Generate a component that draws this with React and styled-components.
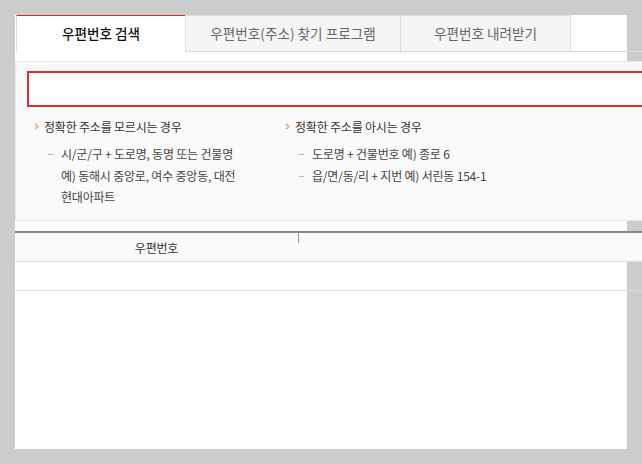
import React from "react";
import styled, { createGlobalStyle } from "styled-components";

const GlobalStyle = createGlobalStyle`
  html, body {
    margin: 0;
    padding: 0;
    background: #cccccc;
    overflow: hidden;
  }
  body {
    padding: 15px;
    font-family: "Noto Sans CJK KR", "Noto Sans", sans-serif;
    color: #333;
  }
  * { box-sizing: border-box; }
`;

const Panel = styled.div`
  width: 612px;
  height: 434px;
  background: #ffffff;
`;

const Content = styled.div`
  width: 660px;
`;

const TabBar = styled.div`
  display: flex;
  padding-left: 1px;
`;

const Tab = styled.div`
  width: ${(p) => p.$w}px;
  height: 37px;
  display: flex;
  align-items: center;
  justify-content: center;
  font-size: 13.6px;
  border: 1px solid #dddddd;
  border-right: ${(p) => (p.$last ? "1px solid #dddddd" : "none")};
  border-top-color: ${(p) => (p.$active ? "#e2241f" : "#dddddd")};
  border-bottom-color: ${(p) => (p.$active ? "#ffffff" : "#d8d8d8")};
  background: ${(p) => (p.$active ? "#ffffff" : "#f5f5f5")};
  color: ${(p) => (p.$active ? "#111111" : "#666666")};
  font-weight: ${(p) => (p.$active ? 500 : 400)};
  padding-bottom: 2px;
`;

const TabFill = styled.div`
  flex: 1;
  height: 37px;
  border-bottom: 1px solid #d8d8d8;
`;

const SearchBox = styled.div`
  margin-top: 9px;
  border: 1px solid #e8e8e8;
  background: #fafafa;
  height: 160px;
  padding: 9px 0 0 11px;
`;

const SearchInput = styled.div`
  height: 36px;
  border: 2px solid #e8282a;
  background: #ffffff;
`;

const Guide = styled.div`
  display: grid;
  grid-template-columns: 251px 1fr;
  padding: 9px 0 0 7px;
`;

const GuideTitle = styled.div`
  display: flex;
  align-items: center;
  gap: 5px;
  font-size: 12px;
  line-height: 21px;
  color: #333;
  letter-spacing: -0.2px;
`;

const Arrow = styled.svg`
  width: 5px;
  height: 7px;
  flex: none;
`;

const SubList = styled.ul`
  list-style: none;
  margin: 6px 0 0 0;
  padding: 0 0 0 14px;
`;

const SubItem = styled.li`
  display: flex;
  align-items: flex-start;
  gap: 8px;
  font-size: 12px;
  line-height: 21.5px;
  color: #444;
  letter-spacing: -0.2px;
`;

const Dash = styled.span`
  flex: none;
  width: 5px;
  height: 1px;
  background: #b8b8b8;
  margin-top: 11px;
`;

const SubText = styled.span`
  width: ${(p) => p.$w || "auto"};
`;

const Table = styled.div`
  margin-top: 10px;
  border-top: 2px solid #888888;
`;

const HeadRow = styled.div`
  display: flex;
  height: 29px;
  background: #fafafa;
  border-bottom: 1px solid #dddddd;
`;

const HeadCell = styled.div`
  width: ${(p) => p.$w}px;
  display: flex;
  align-items: center;
  justify-content: center;
  font-size: 12px;
  color: #333;
  letter-spacing: -0.2px;
`;

const HeadDivider = styled.div`
  width: 1px;
  height: 10px;
  background: #999999;
`;

const BodyRow = styled.div`
  height: 29px;
  border-bottom: 1px solid #dddddd;
`;

const Chevron = () => (
  <Arrow viewBox="0 0 5 7">
    <path d="M1 0.8 L3.8 3.5 L1 6.2" fill="none" stroke="#d3a06e" strokeWidth="1.3" />
  </Arrow>
);

export default function App() {
  return (
    <>
      <GlobalStyle />
      <Panel>
        <Content>
          <TabBar>
            <Tab $w={169} $active>우편번호 검색</Tab>
            <Tab $w={215}>우편번호(주소) 찾기 프로그램</Tab>
            <Tab $w={171} $last>우편번호 내려받기</Tab>
            <TabFill />
          </TabBar>
          <SearchBox>
            <SearchInput />
            <Guide>
              <div>
                <GuideTitle>
                  <Chevron />
                  정확한 주소를 모르시는 경우
                </GuideTitle>
                <SubList>
                  <SubItem>
                    <Dash />
                    <SubText $w="184px">
                      시/군/구 + 도로명, 동명 또는 건물명 예) 동해시 중앙로, 여수 중앙동, 대전 현대아파트
                    </SubText>
                  </SubItem>
                </SubList>
              </div>
              <div>
                <GuideTitle>
                  <Chevron />
                  정확한 주소를 아시는 경우
                </GuideTitle>
                <SubList>
                  <SubItem>
                    <Dash />
                    <SubText>도로명 + 건물번호 예) 종로 6</SubText>
                  </SubItem>
                  <SubItem>
                    <Dash />
                    <SubText>읍/면/동/리 + 지번 예) 서린동 154-1</SubText>
                  </SubItem>
                </SubList>
              </div>
            </Guide>
          </SearchBox>
          <Table>
            <HeadRow>
              <HeadCell $w={283}>우편번호</HeadCell>
              <HeadDivider />
            </HeadRow>
            <BodyRow />
          </Table>
        </Content>
      </Panel>
    </>
  );
}
